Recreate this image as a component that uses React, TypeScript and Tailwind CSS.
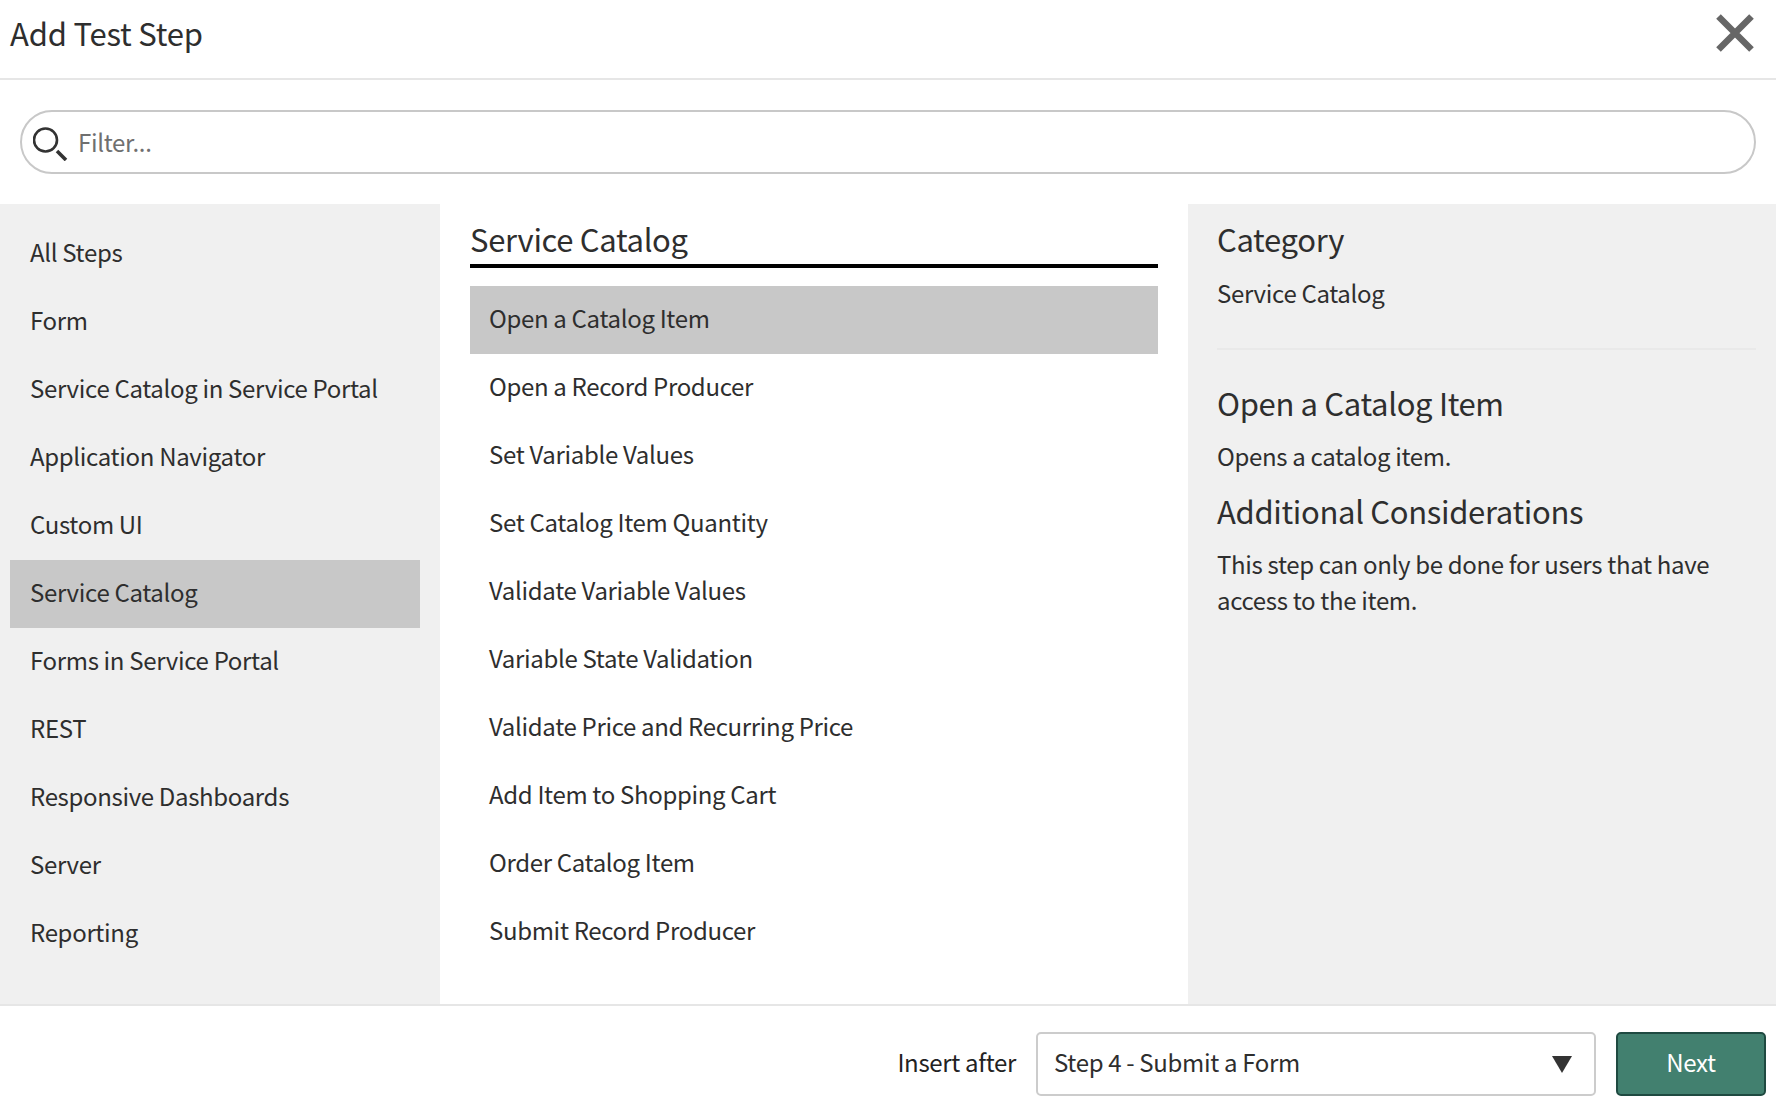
const left = ["All Steps","Form","Service Catalog in Service Portal","Application Navigator","Custom UI","Service Catalog","Forms in Service Portal","REST","Responsive Dashboards","Server","Reporting"];
const mid = ["Open a Catalog Item","Open a Record Producer","Set Variable Values","Set Catalog Item Quantity","Validate Variable Values","Variable State Validation","Validate Price and Recurring Price","Add Item to Shopping Cart","Order Catalog Item","Submit Record Producer"];

export default function App() {
  return (
    <div className="flex h-[1114px] w-[1776px] flex-col overflow-hidden bg-white text-[24px] leading-[36px] tracking-[-0.33px] text-[#2e2e2e] [font-family:'Noto_Sans_CJK_SC','Noto_Sans',sans-serif]">
      <header className="flex h-[80px] shrink-0 items-start justify-between border-b-2 border-[#e6e6e6] pl-[10px] pr-[22px] pt-[14px]">
        <h1 className="text-[31px] font-normal leading-[38px] tracking-[-0.2px] text-[#2e2e2e]">Add Test Step</h1>
        <svg width="38" height="38" viewBox="0 0 38 38" className="text-[#666666]">
          <path d="M2.5 2.5 L35.5 35.5 M35.5 2.5 L2.5 35.5" stroke="currentColor" strokeWidth="6.5" fill="none" />
        </svg>
      </header>
      <div className="flex h-[124px] shrink-0 items-center px-[20px]">
        <div className="flex h-[64px] w-full items-center gap-[9px] rounded-full border-2 border-[#c8c8c8] pl-[11px]">
          <svg width="36" height="38" viewBox="0 0 36 38" fill="none" stroke="#333333">
            <circle cx="12.5" cy="17" r="11.5" strokeWidth="2.6" />
            <path d="M24 28 L33 37" strokeWidth="3.6" />
          </svg>
          <span className="text-[#6f6f6f]">Filter...</span>
        </div>
      </div>
      <main className="flex min-h-0 flex-1">
        <nav className="w-[440px] shrink-0 bg-[#f0f0f0] pl-[10px] pr-[20px] pt-[16px]">
          {left.map((t) => (
            <div key={t} className={`flex h-[68px] items-center pb-[4px] pl-[20px] ${t === "Service Catalog" ? "bg-[#c8c8c8]" : ""}`}>{t}</div>
          ))}
        </nav>
        <section className="w-[748px] shrink-0 px-[30px] pt-[16px]">
          <h2 className="h-[48px] border-b-4 border-black text-[31px] font-normal leading-[38px]">Service Catalog</h2>
          <div className="mt-[18px]">
            {mid.map((t, i) => (
              <div key={t} className={`flex h-[68px] items-center pb-[4px] pl-[19px] ${i === 0 ? "bg-[#c8c8c8]" : ""}`}>{t}</div>
            ))}
          </div>
        </section>
        <aside className="flex-1 bg-[#f0f0f0] pl-[29px] pr-[20px] pt-[14px]">
          <h3 className="text-[31px] font-normal leading-[42px]">Category</h3>
          <p className="mt-[15px]">Service Catalog</p>
          <div className="mt-[37px] border-t-2 border-[#e9e9e9]" />
          <h3 className="mt-[32px] text-[31px] font-normal leading-[42px]">Open a Catalog Item</h3>
          <p className="mt-[14px]">Opens a catalog item.</p>
          <h3 className="mt-[16px] text-[31px] font-normal leading-[42px]">Additional Considerations</h3>
          <p className="mt-[14px]">This step can only be done for users that have access to the item.</p>
        </aside>
      </main>
      <footer className="flex h-[110px] shrink-0 items-start justify-end border-t-2 border-[#e6e6e6] pr-[10px] pt-[26px]">
        <span className="mr-[20px] flex h-[64px] items-center pb-[4px] text-[#222222]">Insert after</span>
        <div className="flex h-[64px] w-[560px] items-center justify-between rounded-[5px] border-2 border-[#cccccc] pl-[16px] pr-[22px]">
          <span className="pb-[4px]">Step 4 - Submit a Form</span>
          <span className="h-0 w-0 border-x-[10px] border-t-[17px] border-x-transparent border-t-[#333333]" />
        </div>
        <button className="ml-[20px] h-[64px] w-[150px] rounded-[5px] border-2 border-[#1f4a41] bg-[#42806f] pb-[4px] text-white">Next</button>
      </footer>
    </div>
  );
}
